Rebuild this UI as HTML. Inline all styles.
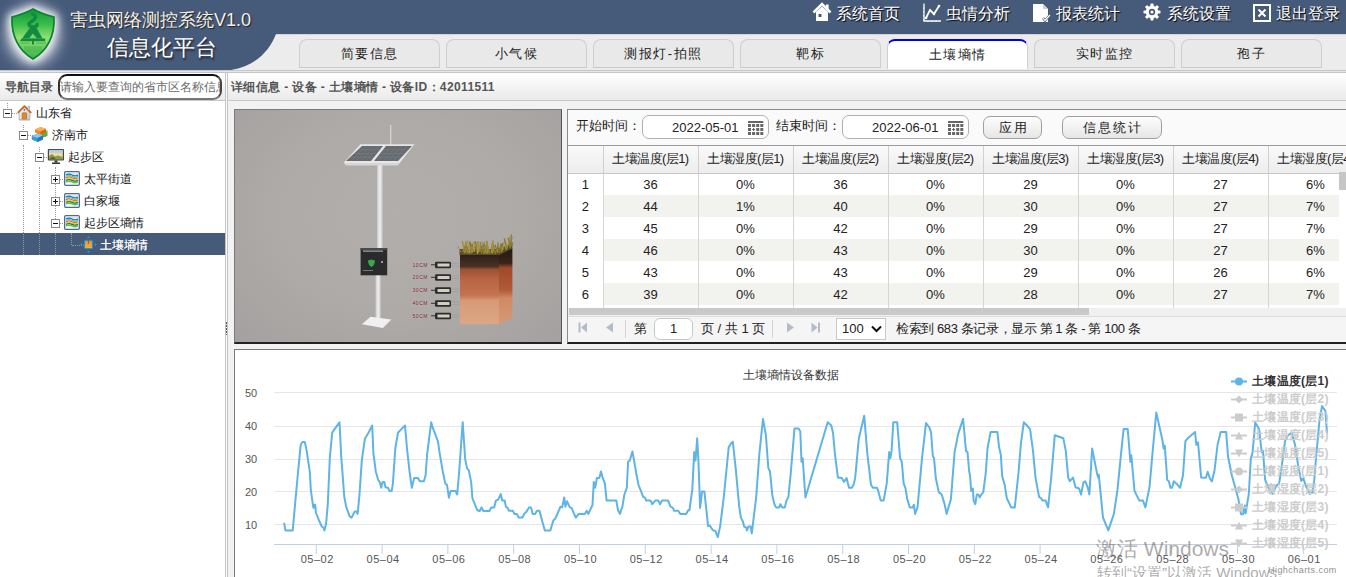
<!DOCTYPE html>
<html><head><meta charset="utf-8">
<style>
*{margin:0;padding:0;box-sizing:border-box}
html,body{width:1346px;height:577px;overflow:hidden;background:#fff;font-family:"Liberation Sans",sans-serif;color:#222}
.a{position:absolute}
.t{white-space:nowrap}
#hdr{left:0;top:0;width:1346px;height:34px;background:#465a7a}
#tabbar{left:0;top:34px;width:1346px;height:37px;background:#ececec;border-top:1px solid #d4d4d4;border-bottom:1px solid #c6c6c6}
#tabline{left:0;top:71px;width:1346px;height:2px;background:#e6e6e6;border-bottom:1px solid #c4c4c4}
.tab{top:39px;width:141px;height:29px;border:1px solid #cfcfcf;border-bottom:1px solid #c8c8c8;border-radius:8px 8px 0 0;background:#e9e9e9;font-size:13px;letter-spacing:1.5px;text-align:center;line-height:28px;color:#222}
.tab.on{background:#fff;border-top:2px solid #0000ee;border-bottom:none;height:30px;line-height:27px}
.nav{top:3px;height:22px;font-size:16px;color:#fff;line-height:22px;text-shadow:1px 1px 1px #000}
#lefthd{left:0;top:73px;width:225px;height:28px;background:linear-gradient(#ffffff,#eaeaea);border-bottom:1px solid #c8c8c8}
#righthd{left:228px;top:73px;width:1118px;height:28px;background:linear-gradient(#ffffff,#eaeaea);border-bottom:1px solid #c8c8c8}
#split{left:225px;top:73px;width:3px;height:504px;background:#fcfcfc;border-left:1px solid #c4c4c4;border-right:1px solid #c4c4c4}
#content{left:228px;top:101px;width:1118px;height:476px;background:#f2f2f2}
.tree{font-size:12px;line-height:22px;height:22px;color:#111}
.tg{width:9px;height:9px;border:1px solid #888;background:#fff}
.tg:before{content:"";position:absolute;left:1px;top:3px;width:5px;height:1px;background:#111}
.tg.p:after{content:"";position:absolute;left:3px;top:1px;width:1px;height:5px;background:#111}
.vd{width:1px;border-left:1px dotted #999}
.hd{height:1px;border-top:1px dotted #999}
#img{left:234px;top:109px;width:328px;height:235px;background:radial-gradient(ellipse at 50% 45%,#b2aeac 0%,#adaaa8 55%,#a4a09f 100%);border:1px solid #7a7a7a;border-bottom:2px solid #222;border-right:1px solid #555}
#data{left:567px;top:109px;width:790px;height:235px;background:#fff;border:1px solid #8a8a8a;border-bottom:2px solid #222}
#tool{left:568px;top:110px;width:778px;height:36px;background:#fafafa;border-bottom:1px solid #9a9a9a}
.lbl{font-size:13px;color:#222;line-height:16px}
.inp{height:24px;border:1px solid #b0b0b0;border-radius:7px;background:#fff;font-size:13px;line-height:21px;color:#222}
.btn{height:23px;border:1px solid #a0a0a0;border-radius:7px;background:linear-gradient(#fdfdfd,#e6e6e6);font-size:13px;line-height:21px;text-align:center;letter-spacing:2px;padding-left:2px;color:#222}
table{border-collapse:collapse;table-layout:fixed}
#tbl{left:568px;top:146px;}
#tbl th{height:27px;letter-spacing:-0.6px;font-weight:normal;font-size:13px;background:linear-gradient(#fafafa,#ececec);border-right:1px solid #d0d0d0;border-bottom:1px solid #c8c8c8;color:#222;white-space:nowrap;overflow:hidden;padding:0}
#tbl td{height:22px;font-size:13px;text-align:center;border-right:1px solid #d6d6d6;color:#222;padding:0;white-space:nowrap}
#tbl tr.e td{background:#f2f2ee}
#tbl td.n{background:#fff !important}
#pager{left:568px;top:316px;width:778px;height:26px;background:#f5f5f5;border-top:1px solid #dcdcdc}
#chart{left:234px;top:349px;width:1112px;height:228px;background:#fff;border-left:1px solid #777;border-top:1px solid #777}
.yl{font-size:11px;color:#555;line-height:12px}
.xl{font-size:11px;color:#555;line-height:12px;letter-spacing:0.5px}
.lg{font-size:12px;font-weight:bold;color:#ccc;line-height:14px;letter-spacing:0.25px}
</style></head><body>
<!-- header -->
<div id="hdr" class="a"></div>
<div id="tabbar" class="a"></div>
<div id="tabline" class="a"></div>
<svg class="a" style="left:0;top:0" width="300" height="72">
  <defs>
    <filter id="blur" x="-50%" y="-50%" width="200%" height="200%"><feGaussianBlur stdDeviation="4"/></filter><filter id="blur2" x="-50%" y="-50%" width="200%" height="200%"><feGaussianBlur stdDeviation="7"/></filter>
    <linearGradient id="shg" x1="0" y1="0" x2="0" y2="1"><stop offset="0" stop-color="#12963a"/><stop offset="0.3" stop-color="#38bc48"/><stop offset="0.58" stop-color="#92e272"/><stop offset="0.8" stop-color="#64ca5a"/><stop offset="1" stop-color="#3aae4c"/></linearGradient>
  </defs>
  <path d="M0,0 L300,0 L300,34 L276,34 C270,50 256,66 231,70 L0,70 Z" fill="#465a7a"/>
  <ellipse cx="33" cy="35" rx="27" ry="30" fill="#fff" opacity="0.6" filter="url(#blur2)"/>
  <path d="M33,6 C40,11 48,13 57,14 C58,36 50,54 33,63 C16,54 8,36 9,14 C18,13 26,11 33,6 Z" fill="#fff" opacity="1" filter="url(#blur)"/>
  <path d="M33,9 C40,13 47,15 54,17 C55,36 47,51 33,59 C19,51 11,36 12,17 C19,15 26,13 33,9 Z" fill="url(#shg)" stroke="#0a8232" stroke-width="1.7"/>
  <g fill="none" stroke="#128a40" stroke-linecap="round">
    <path d="M32.5,14 C37,15.5 36,19 31.5,21.5 C27.5,23.5 28.5,26.5 33,26.8 C36,27 37.5,25.5 37,24.5" stroke-width="3.4"/>
  </g>
  <path d="M30.5,27 L35.5,26 L42.5,38.6 L22,38.6 Z" fill="#128a40"/>
  <path d="M32.8,33.5 L29,38.6 L37,38.6 Z" fill="#7ad464"/>
  <path d="M21.5,38.4 L45.2,38.4 L45.2,41.2 L20,41.2 Z" fill="#128a40"/>
  <rect x="32" y="41" width="2" height="3.5" fill="#128a40"/>
  <g fill="#2a9a48" opacity="0.6"><rect x="20" y="42.5" width="10" height="1"/><rect x="36" y="42.5" width="10" height="1"/><rect x="24" y="46" width="18" height="6" opacity="0.4"/></g>
</svg>
<div class="a t" style="left:70px;top:9px;font-size:18px;line-height:22px;color:#f4f0e6;text-shadow:1px 1px 1px #222">害虫网络测控系统V1.0</div>
<div class="a t" style="left:107px;top:35px;font-size:22px;line-height:26px;color:#fff;text-shadow:1px 2px 2px #222">信息化平台</div>

<!-- nav -->
<svg class="a" style="left:812px;top:2px" width="20" height="20" viewBox="0 0 20 20">
  <path d="M1.5,10.5 L10,2 L18.5,10.5" stroke="#fff" stroke-width="2.6" fill="none" stroke-linejoin="miter"/>
  <rect x="14" y="2.5" width="2.6" height="5" fill="#fff"/>
  <path d="M4,10 L10,4.5 L16,10 L16,19 L4,19 Z" fill="#fff"/>
  <rect x="6.5" y="12" width="3" height="3" fill="#465a7a"/>
</svg>
<div class="a t nav" style="left:836px">系统首页</div>
<svg class="a" style="left:922px;top:2px" width="20" height="20" viewBox="0 0 20 20">
  <path d="M2,1.5 L2,19 L19,19" stroke="#fff" stroke-width="1.3" fill="none"/>
  <path d="M2,18 L1,18 M2,14 L1,14 M2,10 L1,10 M2,6 L1,6 M6,19 L6,20 M10,19 L10,20 M14,19 L14,20" stroke="#fff" stroke-width="1"/>
  <path d="M4,16 L8,8 L12,12 L17,4" stroke="#fff" stroke-width="1.8" fill="none"/>
  <circle cx="4" cy="16" r="1.3" fill="#fff"/><circle cx="12" cy="12" r="1.3" fill="#fff"/><circle cx="17" cy="4" r="1.3" fill="#fff"/>
</svg>
<div class="a t nav" style="left:946px">虫情分析</div>
<svg class="a" style="left:1032px;top:3px" width="20" height="20" viewBox="0 0 20 20">
  <path d="M1,1 L11,1 L16,6 L16,19 L1,19 Z" fill="#fff"/>
  <path d="M11,1 L11,6 L16,6" fill="#ccd" />
  <path d="M11,15 L13,17.5 L18,12" stroke="#465a7a" stroke-width="2.5" fill="none"/>
  <path d="M11,15 L13,17.5 L18,12" stroke="#fff" stroke-width="1.2" fill="none"/>
</svg>
<div class="a t nav" style="left:1056px">报表统计</div>
<svg class="a" style="left:1143px;top:3px" width="18" height="18" viewBox="0 0 18 18">
  <g fill="#fff">
   <circle cx="9" cy="9" r="6.2"/>
   <rect x="7.4" y="0.5" width="3.2" height="17" rx="0.8"/>
   <rect x="7.4" y="0.5" width="3.2" height="17" rx="0.8" transform="rotate(45 9 9)"/>
   <rect x="7.4" y="0.5" width="3.2" height="17" rx="0.8" transform="rotate(90 9 9)"/>
   <rect x="7.4" y="0.5" width="3.2" height="17" rx="0.8" transform="rotate(135 9 9)"/>
  </g>
  <circle cx="9" cy="9" r="3.2" fill="#465a7a"/>
  <circle cx="9" cy="9" r="1.6" fill="#fff"/>
</svg>
<div class="a t nav" style="left:1167px">系统设置</div>
<svg class="a" style="left:1253px;top:4px" width="18" height="18" viewBox="0 0 18 18">
  <rect x="1" y="1" width="16" height="16" fill="none" stroke="#fff" stroke-width="2"/>
  <path d="M5.5,5.5 L12.5,12.5 M12.5,5.5 L5.5,12.5" stroke="#fff" stroke-width="2"/>
</svg>
<div class="a t nav" style="left:1276px">退出登录</div>

<!-- tabs -->
<div class="a t tab" style="left:299px">简要信息</div>
<div class="a t tab" style="left:446px">小气候</div>
<div class="a t tab" style="left:593px">测报灯-拍照</div>
<div class="a t tab" style="left:740px">靶标</div>
<div class="a t tab on" style="left:887px">土壤墒情</div>
<div class="a t tab" style="left:1034px">实时监控</div>
<div class="a t tab" style="left:1181px">孢子</div>

<!-- left panel -->
<div id="lefthd" class="a"></div>
<div class="a t" style="left:5px;top:79px;font-size:12px;font-weight:bold;color:#555;line-height:16px">导航目录</div>
<div class="a" style="left:58px;top:74px;width:164px;height:26px;border:2px solid #222;border-color:#111 #444 #777 #333;border-radius:9px;background:#fff;overflow:hidden">
  <div class="a t" style="left:0px;top:3px;font-size:12px;color:#6c6c6c;line-height:16px">请输入要查询的省市区名称信息</div>
</div>
<div id="split" class="a"></div>
<div class="a" style="left:226px;top:322px;width:1px;height:13px;background:repeating-linear-gradient(#555 0 1.5px,transparent 1.5px 3px)"></div>
<div id="righthd" class="a"></div>
<div class="a t" style="left:231px;top:79px;font-size:12px;font-weight:bold;color:#555;line-height:16px;letter-spacing:0.37px">详细信息 - 设备 - 土壤墒情 - 设备ID：42011511</div>
<div id="content" class="a"></div>

<!-- tree -->
<div class="a" style="left:0;top:233px;width:225px;height:22px;background:#465a7a"></div>
<div class="a vd" style="left:7px;top:103px;height:5px"></div>
<div class="a hd" style="left:12px;top:113px;width:5px"></div>
<div class="a tg" style="left:3px;top:109px"></div>
<div class="a vd" style="left:23px;top:125px;height:5px"></div>
<div class="a hd" style="left:28px;top:135px;width:5px"></div>
<div class="a tg" style="left:19px;top:131px"></div>
<div class="a vd" style="left:23px;top:145px;height:110px"></div>
<div class="a vd" style="left:39px;top:147px;height:5px"></div>
<div class="a hd" style="left:44px;top:157px;width:5px"></div>
<div class="a tg" style="left:35px;top:153px"></div>
<div class="a vd" style="left:39px;top:167px;height:88px"></div>
<div class="a vd" style="left:55px;top:167px;height:60px"></div>
<div class="a hd" style="left:60px;top:179px;width:5px"></div>
<div class="a tg p" style="left:51px;top:175px"></div>
<div class="a hd" style="left:60px;top:201px;width:5px"></div>
<div class="a tg p" style="left:51px;top:197px"></div>
<div class="a hd" style="left:60px;top:223px;width:5px"></div>
<div class="a tg" style="left:51px;top:219px"></div>
<div class="a vd" style="left:55px;top:233px;height:22px"></div>
<div class="a vd" style="left:71px;top:233px;height:12px"></div>
<div class="a hd" style="left:72px;top:245px;width:12px"></div>

<!-- tree icons -->
<svg class="a" style="left:17px;top:105px" width="15" height="16" viewBox="0 0 15 16">
  <defs><linearGradient id="wall" x1="0" y1="0" x2="1" y2="1"><stop offset="0" stop-color="#fafafa"/><stop offset="1" stop-color="#c8c8c8"/></linearGradient></defs>
  <path d="M2,7 L7.5,2 L13,7 L13,14.5 L2,14.5 Z" fill="url(#wall)" stroke="#a0a0a0" stroke-width="0.6"/>
  <path d="M0.8,7.8 L7.5,1.2 L14.2,7.8" stroke="#c8641a" stroke-width="1.8" fill="none" stroke-linejoin="round"/>
  <rect x="11" y="1" width="1.8" height="4" fill="#d8d8d8" stroke="#999" stroke-width="0.4"/>
  <rect x="5.2" y="7.8" width="4.4" height="6.5" rx="0.8" fill="#e08a20" stroke="#b06010" stroke-width="0.6"/>
  <circle cx="7.4" cy="4.8" r="0.9" fill="#2a70c8"/>
  <rect x="2" y="14.5" width="11" height="1" fill="#b0b0b0"/>
</svg>
<div class="a t tree" style="left:36px;top:102px">山东省</div>
<svg class="a" style="left:31px;top:126px" width="18" height="17" viewBox="0 0 18 17">
  <path d="M11,6 L16.5,4.5 L16.5,10 L11,12 Z" fill="#58b040"/><path d="M11,6 L13,5.3 L16.5,4.5 L16.5,5.5 Z" fill="#90d870"/>
  <path d="M4,3.5 L9.5,1 L15,3 L15,6.5 L9.5,9 L4,6.5 Z" fill="#f08820"/>
  <path d="M4,3.5 L9.5,1 L15,3 L9.5,5.5 Z" fill="#ffb050"/>
  <path d="M9.5,5.5 L15,3 L15,6.5 L9.5,9 Z" fill="#d86810"/>
  <path d="M0.8,10 L6.5,7.5 L12,9.5 L12,13.5 L6.5,16 L0.8,13.5 Z" fill="#3a98d8"/>
  <path d="M0.8,10 L6.5,7.5 L12,9.5 L6.5,12 Z" fill="#8ac8f0"/>
  <path d="M6.5,12 L12,9.5 L12,13.5 L6.5,16 Z" fill="#2a78b8"/>
</svg>
<div class="a t tree" style="left:52px;top:124px">济南市</div>
<svg class="a" style="left:47px;top:148px" width="18" height="17" viewBox="0 0 18 17">
  <rect x="0.8" y="1" width="16.2" height="11.5" rx="0.8" fill="#4a4a4a"/>
  <rect x="2" y="2.2" width="13.8" height="9" fill="#f0d8a0"/>
  <rect x="2" y="2.2" width="13.8" height="2.5" fill="#a8d0e8"/>
  <path d="M2,11.2 L2,8 L5,6 L8,8.5 L11,7.5 L15.8,9 L15.8,11.2 Z" fill="#8a9a48"/>
  <path d="M2,11.2 L6,8.5 L9,11.2 Z" fill="#6a5a30"/>
  <rect x="7.5" y="12.5" width="3" height="2" fill="#333"/><rect x="5" y="14.5" width="8" height="1.5" fill="#333"/>
</svg>
<div class="a t tree" style="left:68px;top:146px">起步区</div>
<svg class="a" style="left:64px;top:171px" width="16" height="15" viewBox="0 0 16 15">
  <rect x="0.65" y="0.65" width="14.7" height="13.7" rx="1" fill="#fdfdf8" stroke="#4c6c92" stroke-width="1.3"/>
  <rect x="2" y="2" width="12" height="1.6" fill="#e4e0e0"/>
  <path d="M2,4 Q5,2.4 8,4 T14,4" stroke="#1878b8" stroke-width="1.3" fill="none"/>
  <path d="M2,5.3 Q5,3.7 8,5.3 T14,5.3" stroke="#40c0f0" stroke-width="1.1" fill="none"/>
  <path d="M2,6.7 Q5,5.1 8,6.7 T14,6.7" stroke="#e87010" stroke-width="1.3" fill="none"/>
  <path d="M2,8 Q5,6.4 8,8 T14,8" stroke="#f8c030" stroke-width="1.1" fill="none"/>
  <path d="M2,9.4 Q5,7.8 8,9.4 T14,9.4" stroke="#108040" stroke-width="1.3" fill="none"/>
  <path d="M2,11 Q5,9.4 8,11 T14,11" stroke="#60c050" stroke-width="1.4" fill="none"/>
</svg>
<div class="a t tree" style="left:84px;top:168px">太平街道</div>
<svg class="a" style="left:64px;top:193px" width="16" height="15" viewBox="0 0 16 15">
  <rect x="0.65" y="0.65" width="14.7" height="13.7" rx="1" fill="#fdfdf8" stroke="#4c6c92" stroke-width="1.3"/>
  <rect x="2" y="2" width="12" height="1.6" fill="#e4e0e0"/>
  <path d="M2,4 Q5,2.4 8,4 T14,4" stroke="#1878b8" stroke-width="1.3" fill="none"/>
  <path d="M2,5.3 Q5,3.7 8,5.3 T14,5.3" stroke="#40c0f0" stroke-width="1.1" fill="none"/>
  <path d="M2,6.7 Q5,5.1 8,6.7 T14,6.7" stroke="#e87010" stroke-width="1.3" fill="none"/>
  <path d="M2,8 Q5,6.4 8,8 T14,8" stroke="#f8c030" stroke-width="1.1" fill="none"/>
  <path d="M2,9.4 Q5,7.8 8,9.4 T14,9.4" stroke="#108040" stroke-width="1.3" fill="none"/>
  <path d="M2,11 Q5,9.4 8,11 T14,11" stroke="#60c050" stroke-width="1.4" fill="none"/>
</svg>
<div class="a t tree" style="left:84px;top:190px">白家堰</div>
<svg class="a" style="left:64px;top:215px" width="16" height="15" viewBox="0 0 16 15">
  <rect x="0.65" y="0.65" width="14.7" height="13.7" rx="1" fill="#fdfdf8" stroke="#4c6c92" stroke-width="1.3"/>
  <rect x="2" y="2" width="12" height="1.6" fill="#e4e0e0"/>
  <path d="M2,4 Q5,2.4 8,4 T14,4" stroke="#1878b8" stroke-width="1.3" fill="none"/>
  <path d="M2,5.3 Q5,3.7 8,5.3 T14,5.3" stroke="#40c0f0" stroke-width="1.1" fill="none"/>
  <path d="M2,6.7 Q5,5.1 8,6.7 T14,6.7" stroke="#e87010" stroke-width="1.3" fill="none"/>
  <path d="M2,8 Q5,6.4 8,8 T14,8" stroke="#f8c030" stroke-width="1.1" fill="none"/>
  <path d="M2,9.4 Q5,7.8 8,9.4 T14,9.4" stroke="#108040" stroke-width="1.3" fill="none"/>
  <path d="M2,11 Q5,9.4 8,11 T14,11" stroke="#60c050" stroke-width="1.4" fill="none"/>
</svg>
<div class="a t tree" style="left:84px;top:212px">起步区墒情</div>
<svg class="a" style="left:80px;top:236px" width="17" height="17" viewBox="0 0 17 17">
  <defs><linearGradient id="og" x1="0" y1="0" x2="0" y2="1"><stop offset="0" stop-color="#d89040"/><stop offset="1" stop-color="#f8b040"/></linearGradient></defs>
  <path d="M8.5,0.3 L6.8,2 L10.2,2 Z M8.5,16.7 L6.8,15 L10.2,15 Z M0.3,8.5 L2,6.8 L2,10.2 Z M16.7,8.5 L15,6.8 L15,10.2 Z" fill="#2a98d8"/>
  <rect x="4.3" y="4.3" width="8.4" height="8.4" rx="0.8" fill="url(#og)" stroke="#1a88c8" stroke-width="1.1"/>
  <rect x="8" y="4.5" width="1" height="3" fill="#b05020"/>
</svg>
<div class="a t tree" style="left:100px;top:234px;color:#fff;text-shadow:0 0 0.4px #fff">土壤墒情</div>

<!-- image -->
<div id="img" class="a"></div>
<svg class="a" style="left:235px;top:110px" width="326" height="233" viewBox="235 110 326 233">
  <defs>
    <linearGradient id="pole" x1="0" x2="1">
      <stop offset="0" stop-color="#c8c8c8"/><stop offset="0.5" stop-color="#f2f2f2"/><stop offset="1" stop-color="#b8b8b8"/>
    </linearGradient>
    <linearGradient id="soil" x1="0" y1="0" x2="0" y2="1"><stop offset="0" stop-color="#2c201a"/><stop offset="0.17" stop-color="#4a3224"/><stop offset="0.21" stop-color="#9a5234"/><stop offset="0.35" stop-color="#b86444"/><stop offset="0.58" stop-color="#c27450"/><stop offset="0.66" stop-color="#d89a78"/><stop offset="1" stop-color="#dca684"/></linearGradient>
    <linearGradient id="soil2" x1="0" y1="0" x2="0" y2="1"><stop offset="0" stop-color="#241a16"/><stop offset="0.2" stop-color="#3a2418"/><stop offset="0.26" stop-color="#a04a2c"/><stop offset="0.55" stop-color="#b05a38"/><stop offset="0.66" stop-color="#d08a64"/><stop offset="1" stop-color="#d49a78"/></linearGradient>
  </defs>
  <line x1="390.8" y1="125" x2="390.8" y2="145" stroke="#e0e0e0" stroke-width="1"/>
  <rect x="377" y="163" width="6" height="86" fill="url(#pole)"/>
  <rect x="375.5" y="275" width="5.5" height="44" fill="url(#pole)"/>
  <path d="M360.4,144.2 L414.5,144.2 L399.8,162.9 L343.5,162.9 Z" fill="#e6e6e6"/>
  <path d="M362,146 L383,146 L371,161 L346,161 Z" fill="#666b70"/>
  <path d="M386,146 L412,146 L398,161 L374,161 Z" fill="#666b70"/><path d="M343.5,162.9 L399.8,162.9 L398,165.5 L346,165.5 Z" fill="#d6d6d6"/><g stroke="#80868c" stroke-width="0.5" opacity="0.8"><line x1="358.0" y1="149.8" x2="380.0" y2="149.8"/><line x1="383.0" y1="149.8" x2="408.5" y2="149.8"/><line x1="354.0" y1="153.5" x2="377.0" y2="153.5"/><line x1="380.0" y1="153.5" x2="405.0" y2="153.5"/><line x1="350.0" y1="157.2" x2="374.0" y2="157.2"/><line x1="377.0" y1="157.2" x2="401.5" y2="157.2"/><line x1="366.2" y1="146" x2="351.0" y2="161"/><line x1="391.2" y1="146" x2="378.8" y2="161"/><line x1="370.4" y1="146" x2="356.0" y2="161"/><line x1="396.4" y1="146" x2="383.6" y2="161"/><line x1="374.6" y1="146" x2="361.0" y2="161"/><line x1="401.6" y1="146" x2="388.4" y2="161"/><line x1="378.8" y1="146" x2="366.0" y2="161"/><line x1="406.8" y1="146" x2="393.2" y2="161"/></g>
  <path d="M361.9,324.3 L370.5,316.7 L391.4,319.5 L382.9,328.1 Z" fill="#f0f0f0"/>
  <rect x="360.6" y="248" width="26.6" height="27.3" fill="#2a2b2c"/>
  <rect x="360.6" y="248" width="26.6" height="2" fill="#4a4a4a"/><rect x="363" y="250.5" width="20" height="1.2" fill="#aaa"/>
  <path d="M368,260.5 L371.5,259.5 L375,260.5 C375,264 373.5,266 371.5,267 C369.5,266 368,264 368,260.5 Z" fill="#3aa848"/><circle cx="382" cy="262" r="0.9" fill="#ccc"/><rect x="363" y="270" width="10" height="1" fill="#777"/>
  <g fill="#c8b0b0" opacity="0.7">
    <rect x="412" y="262.5" width="16" height="4.5"/><rect x="412" y="275" width="16" height="4.5"/><rect x="412" y="288" width="16" height="4.5"/><rect x="412" y="301" width="16" height="4.5"/><rect x="412" y="313.5" width="16" height="4.5"/>
  </g>
  <g font-size="5" fill="#6a2a38" font-family="Liberation Sans" textLength="15">
    <text x="412.5" y="266.8" textLength="15">10CM</text><text x="412.5" y="279.3" textLength="15">20CM</text><text x="412.5" y="292.3" textLength="15">30CM</text><text x="412.5" y="305.3" textLength="15">40CM</text><text x="412.5" y="317.8" textLength="15">50CM</text>
  </g>
  <g>
    <g stroke="#333" stroke-width="1"><line x1="431" y1="264.8" x2="436" y2="264.8"/><line x1="431" y1="277.3" x2="436" y2="277.3"/><line x1="431" y1="290.3" x2="436" y2="290.3"/><line x1="431" y1="303.3" x2="436" y2="303.3"/><line x1="431" y1="315.8" x2="436" y2="315.8"/></g>
    <g stroke="#9a9a9a" stroke-width="0.6"><path d="M451,263.5 H459 M451,266 H459 M451,276 H459 M451,278.5 H459 M451,289 H459 M451,291.5 H459 M451,302 H459 M451,304.5 H459 M451,314.5 H459 M451,317 H459"/></g>
    <rect x="435" y="261.8" width="16" height="6.5" rx="1.3" fill="#2c2c2c"/>
    <rect x="435" y="274.3" width="16" height="6.5" rx="1.3" fill="#2c2c2c"/>
    <rect x="435" y="287.3" width="16" height="6.5" rx="1.3" fill="#2c2c2c"/>
    <rect x="435" y="300.3" width="16" height="6.5" rx="1.3" fill="#2c2c2c"/>
    <rect x="435" y="312.8" width="16" height="6.5" rx="1.3" fill="#2c2c2c"/>
    <g fill="#d0d0c0">
    <rect x="437.5" y="263.5" width="12" height="3"/><rect x="437.5" y="276" width="12" height="3"/><rect x="437.5" y="289" width="12" height="3"/><rect x="437.5" y="302" width="12" height="3"/><rect x="437.5" y="314.5" width="12" height="3"/>
    </g>
  </g>
  <path d="M460,254.8 L499,254.8 L499,324.3 L460,324.3 Z" fill="url(#soil)"/>
  <path d="M499,254.8 L512.4,248 L512.4,318 L499,324.3 Z" fill="url(#soil2)"/>
  <path d="M459.5,255 L459.5,249 L499,249 L512.4,243 L512.4,248.2 L499,255 Z" fill="#5a4a28"/><g stroke-linecap="round"><path d="M476.5,251.4 L474.0,242.2" stroke="#7a6a2a" stroke-width="0.9"/><path d="M489.7,253.3 L487.2,247.6" stroke="#a89848" stroke-width="0.9"/><path d="M464.6,252.1 L462.4,241.4" stroke="#9a8a3c" stroke-width="1.3"/><path d="M489.7,251.2 L487.0,242.5" stroke="#9a8a3c" stroke-width="0.8"/><path d="M503.8,249.3 L501.5,244.2" stroke="#8a7830" stroke-width="1.2"/><path d="M494.8,251.3 L492.9,242.7" stroke="#8c7c34" stroke-width="1.2"/><path d="M463.2,251.1 L464.3,245.5" stroke="#a89848" stroke-width="1.4"/><path d="M483.7,253.3 L482.2,246.4" stroke="#9a8a3c" stroke-width="1.4"/><path d="M472.4,252.4 L474.7,244.2" stroke="#a89848" stroke-width="1.0"/><path d="M510.0,245.8 L511.5,238.5" stroke="#9a8a3c" stroke-width="1.5"/><path d="M481.5,253.4 L481.9,248.8" stroke="#8a7830" stroke-width="1.1"/><path d="M477.9,252.2 L475.3,241.9" stroke="#8c7c34" stroke-width="1.6"/><path d="M484.2,252.7 L485.4,248.2" stroke="#7a6a2a" stroke-width="1.6"/><path d="M501.9,250.3 L502.9,243.2" stroke="#8c7c34" stroke-width="1.6"/><path d="M478.1,252.5 L476.4,244.6" stroke="#8a7830" stroke-width="0.9"/><path d="M472.6,252.0 L470.1,241.0" stroke="#a89848" stroke-width="1.1"/><path d="M474.2,251.3 L474.5,243.9" stroke="#a89848" stroke-width="1.6"/><path d="M494.8,252.0 L492.3,246.1" stroke="#9a8a3c" stroke-width="1.0"/><path d="M471.9,252.2 L470.5,243.5" stroke="#8c7c34" stroke-width="0.9"/><path d="M487.3,252.5 L485.0,246.0" stroke="#7a6a2a" stroke-width="1.6"/><path d="M493.4,252.8 L495.6,245.2" stroke="#7a6a2a" stroke-width="1.1"/><path d="M480.3,251.3 L477.7,242.2" stroke="#8c7c34" stroke-width="1.6"/><path d="M482.5,251.3 L480.1,242.5" stroke="#7a6a2a" stroke-width="0.9"/><path d="M465.2,251.9 L467.4,247.7" stroke="#7a6a2a" stroke-width="1.1"/><path d="M492.4,253.4 L492.2,244.6" stroke="#8c7c34" stroke-width="1.5"/><path d="M510.6,246.3 L508.2,238.5" stroke="#8c7c34" stroke-width="1.4"/><path d="M497.8,252.2 L497.9,242.7" stroke="#9a8a3c" stroke-width="1.6"/><path d="M486.9,251.4 L484.1,243.0" stroke="#7a6a2a" stroke-width="1.0"/><path d="M492.8,251.2 L492.9,240.5" stroke="#9a8a3c" stroke-width="1.1"/><path d="M471.4,252.4 L472.2,244.3" stroke="#7a6a2a" stroke-width="1.4"/><path d="M510.2,247.5 L512.1,237.1" stroke="#9a8a3c" stroke-width="1.0"/><path d="M485.1,252.8 L486.9,240.9" stroke="#a89848" stroke-width="1.0"/><path d="M495.3,253.4 L497.9,245.8" stroke="#8a7830" stroke-width="1.6"/><path d="M478.6,251.6 L476.8,245.7" stroke="#9a8a3c" stroke-width="1.2"/><path d="M510.2,246.9 L512.7,242.9" stroke="#8a7830" stroke-width="1.4"/><path d="M464.3,252.7 L466.0,241.4" stroke="#9a8a3c" stroke-width="1.2"/><path d="M469.1,253.0 L470.9,246.3" stroke="#a89848" stroke-width="1.2"/><path d="M497.9,251.2 L500.9,245.9" stroke="#8c7c34" stroke-width="0.9"/><path d="M506.1,249.4 L508.1,244.3" stroke="#a89848" stroke-width="1.3"/><path d="M477.9,252.4 L475.0,247.3" stroke="#8c7c34" stroke-width="1.2"/><path d="M507.6,247.8 L509.6,236.8" stroke="#9a8a3c" stroke-width="0.8"/><path d="M470.9,252.3 L469.8,242.1" stroke="#7a6a2a" stroke-width="1.1"/><path d="M466.7,253.3 L466.4,246.4" stroke="#7a6a2a" stroke-width="1.5"/><path d="M486.4,253.1 L484.1,242.0" stroke="#9a8a3c" stroke-width="1.2"/><path d="M461.0,252.1 L458.0,246.6" stroke="#9a8a3c" stroke-width="0.9"/><path d="M484.1,252.8 L483.1,244.4" stroke="#7a6a2a" stroke-width="1.2"/><path d="M484.6,252.9 L481.9,241.9" stroke="#9a8a3c" stroke-width="1.0"/><path d="M499.4,252.1 L500.9,243.6" stroke="#8c7c34" stroke-width="1.2"/><path d="M491.2,252.3 L492.4,244.2" stroke="#a89848" stroke-width="1.2"/><path d="M501.2,251.2 L501.3,245.2" stroke="#8a7830" stroke-width="1.5"/><path d="M505.5,248.2 L505.0,240.7" stroke="#a89848" stroke-width="1.2"/><path d="M463.7,251.6 L464.7,247.0" stroke="#8c7c34" stroke-width="1.5"/><path d="M467.9,252.8 L465.7,243.5" stroke="#9a8a3c" stroke-width="1.6"/><path d="M471.2,253.4 L471.1,246.2" stroke="#9a8a3c" stroke-width="0.9"/><path d="M482.0,252.3 L480.2,245.6" stroke="#8a7830" stroke-width="0.9"/><path d="M478.7,251.8 L479.9,244.2" stroke="#a89848" stroke-width="1.1"/><path d="M491.8,252.3 L494.7,247.8" stroke="#9a8a3c" stroke-width="1.6"/><path d="M465.3,251.7 L467.0,247.3" stroke="#8a7830" stroke-width="1.4"/><path d="M501.8,251.7 L504.5,242.3" stroke="#a89848" stroke-width="0.9"/><path d="M506.9,248.5 L504.4,238.9" stroke="#8c7c34" stroke-width="1.4"/><path d="M469.4,253.2 L466.5,247.1" stroke="#8c7c34" stroke-width="1.4"/><path d="M464.3,253.1 L466.4,248.6" stroke="#a89848" stroke-width="0.8"/><path d="M510.7,246.2 L511.4,234.9" stroke="#8c7c34" stroke-width="1.2"/><path d="M472.2,251.3 L469.5,246.0" stroke="#9a8a3c" stroke-width="1.5"/><path d="M492.1,252.3 L491.7,246.7" stroke="#9a8a3c" stroke-width="1.0"/><path d="M501.0,252.5 L498.1,248.2" stroke="#7a6a2a" stroke-width="1.2"/><path d="M469.7,252.2 L467.3,240.7" stroke="#a89848" stroke-width="1.3"/><path d="M487.8,253.2 L486.7,241.5" stroke="#9a8a3c" stroke-width="1.6"/><path d="M477.5,253.1 L478.3,243.4" stroke="#a89848" stroke-width="1.6"/><path d="M510.1,247.6 L510.8,243.4" stroke="#8a7830" stroke-width="1.1"/></g>
</svg>

<!-- data panel -->
<div id="data" class="a"></div>
<div id="tool" class="a"></div>
<div class="a t lbl" style="left:576px;top:118px">开始时间：</div>
<div class="a inp" style="left:642px;top:115px;width:127px"><span class="a t" style="left:29px;top:1px">2022-05-01</span></div>
<div class="a t lbl" style="left:776px;top:118px">结束时间：</div>
<div class="a inp" style="left:842px;top:115px;width:127px"><span class="a t" style="left:29px;top:1px">2022-06-01</span></div>
<svg class="a" style="left:748px;top:121px" width="16" height="15" viewBox="0 0 16 15"><g fill="#666"><rect x="0" y="0" width="15.3" height="2"/><rect x="0" y="3" width="3" height="3"/><rect x="4.1" y="3" width="3" height="3"/><rect x="8.2" y="3" width="3" height="3"/><rect x="12.3" y="3" width="3" height="3"/><rect x="0" y="7" width="3" height="3"/><path d="M5.6,7 V10 M4.1,8.5 H7.1" stroke="#666" stroke-width="1.2"/><rect x="8.2" y="7" width="3" height="3"/><rect x="12.3" y="7" width="3" height="3"/><rect x="0" y="11" width="3" height="3"/><rect x="4.1" y="11" width="3" height="3"/><rect x="8.2" y="11" width="3" height="3"/><rect x="12.3" y="11" width="3" height="3"/></g></svg>
<svg class="a" style="left:948px;top:121px" width="16" height="15" viewBox="0 0 16 15"><g fill="#666"><rect x="0" y="0" width="15.3" height="2"/><rect x="0" y="3" width="3" height="3"/><rect x="4.1" y="3" width="3" height="3"/><rect x="8.2" y="3" width="3" height="3"/><rect x="12.3" y="3" width="3" height="3"/><rect x="0" y="7" width="3" height="3"/><path d="M5.6,7 V10 M4.1,8.5 H7.1" stroke="#666" stroke-width="1.2"/><rect x="8.2" y="7" width="3" height="3"/><rect x="12.3" y="7" width="3" height="3"/><rect x="0" y="11" width="3" height="3"/><rect x="4.1" y="11" width="3" height="3"/><rect x="8.2" y="11" width="3" height="3"/><rect x="12.3" y="11" width="3" height="3"/></g></svg>
<div class="a btn t" style="left:983px;top:116px;width:59px">应用</div>
<div class="a btn t" style="left:1062px;top:116px;width:100px">信息统计</div>

<div class="a" style="left:568px;top:146px;width:778px;height:170px;overflow:hidden">
<table id="tbl" class="a" style="left:0;top:0;width:795px">
<colgroup><col style="width:35px"><col style="width:95px"><col style="width:95px"><col style="width:95px"><col style="width:95px"><col style="width:95px"><col style="width:95px"><col style="width:95px"><col style="width:95px"></colgroup>
<tr><th></th><th>土壤温度(层1)</th><th>土壤湿度(层1)</th><th>土壤温度(层2)</th><th>土壤湿度(层2)</th><th>土壤温度(层3)</th><th>土壤湿度(层3)</th><th>土壤温度(层4)</th><th>土壤湿度(层4)</th></tr>
<tr><td class="n">1</td><td>36</td><td>0%</td><td>36</td><td>0%</td><td>29</td><td>0%</td><td>27</td><td>6%</td></tr>
<tr class="e"><td class="n">2</td><td>44</td><td>1%</td><td>40</td><td>0%</td><td>30</td><td>0%</td><td>27</td><td>7%</td></tr>
<tr><td class="n">3</td><td>45</td><td>0%</td><td>42</td><td>0%</td><td>29</td><td>0%</td><td>27</td><td>7%</td></tr>
<tr class="e"><td class="n">4</td><td>46</td><td>0%</td><td>43</td><td>0%</td><td>30</td><td>0%</td><td>27</td><td>6%</td></tr>
<tr><td class="n">5</td><td>43</td><td>0%</td><td>43</td><td>0%</td><td>29</td><td>0%</td><td>26</td><td>6%</td></tr>
<tr class="e"><td class="n">6</td><td>39</td><td>0%</td><td>42</td><td>0%</td><td>28</td><td>0%</td><td>27</td><td>7%</td></tr>
<tr><td class="n">7</td><td>36</td><td>0%</td><td>40</td><td>0%</td><td>28</td><td>0%</td><td>27</td><td>7%</td></tr>
</table>
</div>
<div class="a" style="left:1339px;top:172px;width:7px;height:136px;background:#fff"></div>
<div class="a" style="left:1339px;top:172px;width:7px;height:18px;background:#c6c6c6"></div>
<div class="a" style="left:568px;top:308px;width:778px;height:8px;background:#f0f0f0"></div>
<div class="a" style="left:569px;top:308px;width:520px;height:7px;background:#c8c9c8"></div>
<div id="pager" class="a"></div>
<svg class="a" style="left:568px;top:316px" width="778" height="26">
  <g fill="#b4bcc8">
   <rect x="10.5" y="6.5" width="2" height="10"/><path d="M19,6.5 L13,11.5 L19,16.5 Z"/>
   <path d="M45,6.5 L38,11.5 L45,16.5 Z"/>
   <path d="M219,6.5 L226,11.5 L219,16.5 Z"/>
   <path d="M243.5,6.5 L249.5,11.5 L243.5,16.5 Z"/><rect x="250" y="6.5" width="2" height="10"/>
  </g>
  <rect x="57" y="4" width="1" height="18" fill="#d4d4d4"/>
  <rect x="204" y="4" width="1" height="18" fill="#d4d4d4"/>
</svg>
<div class="a t lbl" style="left:634px;top:321px">第</div>
<div class="a inp" style="left:654px;top:318px;width:39px;height:22px;border-radius:6px;border-color:#c8c8c8;text-align:center;line-height:20px">1</div>
<div class="a t lbl" style="left:701px;top:321px">页 / 共 1 页</div>
<div class="a" style="left:836px;top:318px;width:50px;height:22px;border:1px solid #c8c8c8;background:#fff;font-size:13px;line-height:20px"><span class="a t" style="left:5px;top:0">100</span>
<svg class="a" style="left:34px;top:6px" width="11" height="8"><path d="M1,1.5 L5.5,6 L10,1.5" stroke="#111" stroke-width="2" fill="none"/></svg></div>
<div class="a t lbl" style="left:896px;top:321px;letter-spacing:-0.4px">检索到 683 条记录，显示 第 1 条 - 第 100 条</div>

<!-- chart -->
<div id="chart" class="a"></div>
<svg class="a" style="left:0;top:0" width="1346" height="577" viewBox="0 0 1346 577">
  <g stroke="#e6e6e6" stroke-width="1">
    <line x1="274" y1="392.5" x2="1337" y2="392.5"/>
    <line x1="274" y1="426.5" x2="1337" y2="426.5"/>
    <line x1="274" y1="459.5" x2="1337" y2="459.5"/>
    <line x1="274" y1="491.5" x2="1337" y2="491.5"/>
    <line x1="274" y1="524.5" x2="1337" y2="524.5"/>
  </g>
  <line x1="274" y1="544.5" x2="1337" y2="544.5" stroke="#c0d0e0" stroke-width="1"/>
  <g stroke="#c0d0e0" stroke-width="1" id="ticks"></g>
  <line x1="316.3" y1="544" x2="316.3" y2="554" stroke="#c0d0e0"/><line x1="382.1" y1="544" x2="382.1" y2="554" stroke="#c0d0e0"/><line x1="447.9" y1="544" x2="447.9" y2="554" stroke="#c0d0e0"/><line x1="513.7" y1="544" x2="513.7" y2="554" stroke="#c0d0e0"/><line x1="579.5" y1="544" x2="579.5" y2="554" stroke="#c0d0e0"/><line x1="645.3" y1="544" x2="645.3" y2="554" stroke="#c0d0e0"/><line x1="711.1" y1="544" x2="711.1" y2="554" stroke="#c0d0e0"/><line x1="776.9" y1="544" x2="776.9" y2="554" stroke="#c0d0e0"/><line x1="842.7" y1="544" x2="842.7" y2="554" stroke="#c0d0e0"/><line x1="908.5" y1="544" x2="908.5" y2="554" stroke="#c0d0e0"/><line x1="974.3" y1="544" x2="974.3" y2="554" stroke="#c0d0e0"/><line x1="1040.1" y1="544" x2="1040.1" y2="554" stroke="#c0d0e0"/><line x1="1105.9" y1="544" x2="1105.9" y2="554" stroke="#c0d0e0"/><line x1="1171.7" y1="544" x2="1171.7" y2="554" stroke="#c0d0e0"/><line x1="1237.5" y1="544" x2="1237.5" y2="554" stroke="#c0d0e0"/><line x1="1303.3" y1="544" x2="1303.3" y2="554" stroke="#c0d0e0"/>
  <path d="M284.2,523.6 L285.4,530.4 L292.7,530.4 L295.1,504.2 L298.2,470.3 L300.7,444.8 L302.4,441.9 L304.8,441.9 L306.7,450.9 L309.9,472.7 L310.8,489.7 L312.8,504.2 L313.5,507.9 L314.0,504.7 L315.2,504.7 L315.9,512.7 L318.8,520.0 L321.8,526.5 L323.7,528.0 L324.4,530.4 L326.1,523.6 L327.8,504.2 L329.8,458.2 L332.2,432.7 L334.6,429.1 L339.5,422.3 L341.2,455.8 L344.3,497.0 L346.2,506.7 L349.6,516.4 L351.6,517.6 L354.7,511.5 L356.4,511.5 L357.6,513.9 L359.3,497.0 L361.8,460.6 L364.9,438.8 L368.5,432.7 L372.2,425.5 L373.4,453.3 L375.8,471.5 L378.2,480.0 L379.9,482.4 L381.2,487.8 L382.6,481.9 L384.3,481.9 L385.5,487.3 L387.9,487.8 L389.6,490.9 L391.7,490.9 L392.9,483.6 L395.3,448.5 L398.0,432.7 L400.9,429.6 L405.0,425.5 L407.0,448.5 L409.4,470.3 L411.8,487.8 L414.2,478.0 L417.9,478.0 L419.8,481.2 L423.9,481.2 L425.6,475.2 L427.1,454.5 L431.2,422.3 L432.4,426.7 L438.0,441.7 L439.7,453.3 L442.8,471.5 L445.3,483.6 L447.0,484.8 L448.9,497.7 L450.6,490.9 L455.5,490.9 L457.2,494.5 L459.1,472.7 L462.7,422.3 L465.2,459.4 L467.1,468.4 L468.8,470.3 L471.2,482.4 L472.4,498.2 L477.3,510.3 L479.7,511.0 L481.6,507.4 L483.3,511.0 L489.4,511.0 L491.3,507.4 L494.2,507.4 L495.9,500.6 L498.4,499.4 L500.8,494.1 L502.2,500.6 L504.7,500.6 L505.9,506.7 L507.6,507.9 L508.9,510.8 L512.8,510.8 L514.5,513.9 L516.9,513.9 L518.6,517.6 L522.5,517.6 L524.2,513.9 L526.6,511.5 L529.0,507.4 L531.0,507.4 L532.7,513.9 L535.1,513.9 L537.0,510.8 L539.5,510.8 L541.9,520.0 L544.8,530.4 L550.4,530.4 L553.3,520.5 L555.2,518.8 L560.5,506.7 L562.2,507.4 L564.2,497.5 L565.4,506.7 L567.1,501.3 L569.8,507.4 L571.5,507.9 L575.8,517.6 L578.7,513.9 L584.8,513.9 L586.7,510.8 L588.4,513.9 L592.5,505.0 L593.8,481.9 L595.2,487.8 L596.9,478.0 L599.3,478.0 L601.0,471.5 L602.5,477.1 L604.9,483.6 L606.6,500.6 L616.3,500.6 L618.0,510.3 L619.9,513.9 L622.4,506.7 L624.4,494.5 L626.8,487.8 L628.1,461.8 L629.8,460.6 L632.4,451.4 L634.1,460.6 L636.1,472.7 L638.5,484.8 L643.3,497.0 L645.0,497.7 L646.2,500.6 L650.6,500.6 L652.3,504.2 L655.2,500.6 L658.4,500.6 L660.1,504.2 L662.0,500.6 L668.1,500.6 L670.5,506.7 L672.9,507.9 L674.1,510.8 L678.2,510.8 L680.2,513.9 L686.2,513.9 L688.2,510.3 L689.4,510.3 L692.3,489.7 L694.2,452.1 L695.5,460.6 L697.2,438.3 L698.4,460.6 L700.1,507.9 L702.0,491.6 L704.4,491.6 L708.1,526.1 L709.8,525.6 L712.9,530.2 L715.3,530.9 L717.8,537.0 L720.2,526.1 L723.8,497.0 L728.7,447.3 L731.1,443.2 L732.8,441.7 L735.9,470.3 L739.2,506.7 L740.9,517.6 L742.8,521.2 L744.1,526.5 L746.0,527.3 L747.0,530.4 L748.4,526.5 L750.6,526.5 L751.8,533.3 L756.2,497.0 L759.3,454.5 L763.0,418.9 L765.9,435.2 L768.3,467.9 L770.0,471.5 L772.4,495.8 L774.4,504.2 L776.1,507.4 L779.2,507.4 L780.4,504.2 L782.1,507.4 L784.8,507.4 L786.5,500.6 L788.4,497.0 L790.8,472.7 L794.5,428.6 L798.6,428.6 L800.3,431.5 L801.5,461.8 L802.7,458.2 L805.4,497.5 L827.7,422.3 L831.3,425.5 L833.0,432.7 L835.0,454.5 L837.9,477.6 L841.8,478.0 L843.9,481.9 L846.6,478.0 L849.0,487.8 L851.9,487.8 L854.0,483.6 L855.2,477.6 L858.8,438.8 L864.2,415.8 L867.3,453.3 L871.0,484.8 L872.9,487.8 L877.0,487.8 L878.2,490.9 L880.7,500.6 L883.6,500.6 L886.7,483.6 L889.2,452.1 L890.4,458.2 L891.6,450.9 L893.3,422.3 L897.2,422.3 L900.1,458.2 L901.8,461.8 L903.7,483.6 L905.4,487.8 L907.3,499.4 L909.8,507.4 L912.7,507.4 L913.9,504.7 L915.1,513.9 L917.5,507.4 L921.9,459.4 L926.0,423.0 L929.6,427.9 L931.1,432.7 L932.8,455.8 L934.0,458.2 L935.9,478.8 L938.8,492.1 L941.8,494.5 L944.9,505.5 L946.6,513.9 L948.5,507.4 L950.9,499.4 L954.6,452.1 L958.2,433.9 L963.1,418.9 L966.0,450.9 L967.5,452.1 L969.2,471.5 L970.0,475.2 L971.2,490.9 L972.9,488.5 L973.6,500.6 L975.3,504.2 L976.8,494.5 L978.5,494.5 L979.7,497.5 L981.4,494.5 L983.3,492.1 L985.8,472.7 L987.5,448.5 L990.6,432.0 L997.4,432.0 L999.1,447.3 L1000.8,454.5 L1002.2,476.4 L1004.7,484.8 L1006.8,498.2 L1011.2,507.4 L1014.8,507.4 L1018.5,472.7 L1020.9,443.6 L1023.8,422.3 L1027.0,425.5 L1030.1,429.1 L1033.0,450.9 L1035.5,477.6 L1039.1,497.0 L1041.0,498.2 L1042.7,500.6 L1045.6,500.6 L1048.1,507.4 L1051.2,477.6 L1054.8,435.2 L1063.3,438.3 L1065.8,450.9 L1068.2,477.6 L1069.9,481.2 L1073.0,477.6 L1075.5,487.3 L1079.1,488.5 L1081.0,494.5 L1083.5,482.4 L1085.2,481.2 L1087.7,487.3 L1089.4,494.5 L1092.1,448.5 L1096.9,472.7 L1098.1,477.6 L1098.8,474.7 L1100.5,492.1 L1103.0,517.6 L1108.3,530.4 L1113.9,513.9 L1117.5,489.7 L1121.2,452.1 L1123.6,429.1 L1127.7,429.1 L1130.4,461.8 L1131.3,455.3 L1134.5,490.9 L1139.3,500.6 L1143.0,500.6 L1145.4,507.4 L1149.5,487.3 L1152.7,450.9 L1156.3,412.6 L1162.4,440.0 L1163.6,448.5 L1164.8,445.6 L1167.2,480.0 L1168.9,481.2 L1170.4,487.8 L1172.1,487.8 L1173.8,481.2 L1177.6,484.8 L1180.1,487.8 L1183.0,475.2 L1185.4,441.2 L1187.8,438.3 L1195.1,432.0 L1196.3,444.8 L1198.0,442.4 L1201.2,477.6 L1205.9,477.8 L1207.7,471.8 L1209.8,478.3 L1211.9,481.4 L1214.5,470.5 L1217.6,444.5 L1220.7,432.1 L1226.2,432.1 L1228.0,456.2 L1231.9,475.7 L1234.5,484.8 L1238.4,499.1 L1241.0,514.2 L1243.0,514.2 L1244.9,505.6 L1245.6,513.4 L1248.8,493.9 L1250.8,458.8 L1252.6,452.3 L1255.2,422.5 L1259.1,429.0 L1261.7,452.3 L1263.0,451.0 L1265.1,479.6 L1268.2,487.4 L1272.6,493.9 L1276.0,486.1 L1279.1,483.5 L1281.2,470.5 L1285.1,440.6 L1287.7,435.5 L1291.6,432.9 L1295.0,444.5 L1298.1,465.3 L1301.2,480.9 L1303.3,478.3 L1305.9,486.1 L1309.8,493.9 L1312.4,492.6 L1314.2,480.9 L1316.3,454.9 L1319.4,421.2 L1322.0,406.1 L1325.4,410.8 L1327.0,433.0" fill="none" stroke="#5eb4e6" stroke-width="2" stroke-linejoin="round" stroke-linecap="round"/>
</svg>
<div class="a t" style="left:743px;top:368px;font-size:12px;line-height:14px;color:#333">土壤墒情设备数据</div>
<div class="a t yl" style="left:245px;top:387px">50</div>
<div class="a t yl" style="left:245px;top:420px">40</div>
<div class="a t yl" style="left:245px;top:453px">30</div>
<div class="a t yl" style="left:245px;top:486px">20</div>
<div class="a t yl" style="left:245px;top:519px">10</div>
<div class="a t xl" style="left:297.3px;top:553px;width:40px;text-align:center">05–02</div><div class="a t xl" style="left:363.1px;top:553px;width:40px;text-align:center">05–04</div><div class="a t xl" style="left:428.9px;top:553px;width:40px;text-align:center">05–06</div><div class="a t xl" style="left:494.7px;top:553px;width:40px;text-align:center">05–08</div><div class="a t xl" style="left:560.5px;top:553px;width:40px;text-align:center">05–10</div><div class="a t xl" style="left:626.3px;top:553px;width:40px;text-align:center">05–12</div><div class="a t xl" style="left:692.1px;top:553px;width:40px;text-align:center">05–14</div><div class="a t xl" style="left:757.9px;top:553px;width:40px;text-align:center">05–16</div><div class="a t xl" style="left:823.7px;top:553px;width:40px;text-align:center">05–18</div><div class="a t xl" style="left:889.5px;top:553px;width:40px;text-align:center">05–20</div><div class="a t xl" style="left:955.3px;top:553px;width:40px;text-align:center">05–22</div><div class="a t xl" style="left:1021.1px;top:553px;width:40px;text-align:center">05–24</div><div class="a t xl" style="left:1086.9px;top:553px;width:40px;text-align:center">05–26</div><div class="a t xl" style="left:1152.7px;top:553px;width:40px;text-align:center">05–28</div><div class="a t xl" style="left:1218.5px;top:553px;width:40px;text-align:center">05–30</div><div class="a t xl" style="left:1284.3px;top:553px;width:40px;text-align:center">06–01</div>
<svg class="a" style="left:1228px;top:370px" width="22" height="190" viewBox="1228 370 22 190"><line x1="1231" y1="381.5" x2="1247" y2="381.5" stroke="#5eb4e6" stroke-width="2"/><circle cx="1239" cy="381.5" r="4" fill="#5eb4e6"/><line x1="1231" y1="399.5" x2="1247" y2="399.5" stroke="#cccccc" stroke-width="2"/><path d="M1239,395.5 L1243,399.5 L1239,403.5 L1235,399.5 Z" fill="#cccccc"/><line x1="1231" y1="417.5" x2="1247" y2="417.5" stroke="#cccccc" stroke-width="2"/><rect x="1235" y="413.5" width="8" height="8" fill="#cccccc"/><line x1="1231" y1="435.5" x2="1247" y2="435.5" stroke="#cccccc" stroke-width="2"/><path d="M1239,431.5 L1243,439.5 L1235,439.5 Z" fill="#cccccc"/><line x1="1231" y1="453.5" x2="1247" y2="453.5" stroke="#cccccc" stroke-width="2"/><path d="M1235,449.5 L1243,449.5 L1239,457.5 Z" fill="#cccccc"/><line x1="1231" y1="471.5" x2="1247" y2="471.5" stroke="#cccccc" stroke-width="2"/><circle cx="1239" cy="471.5" r="4" fill="#cccccc"/><line x1="1231" y1="489.5" x2="1247" y2="489.5" stroke="#cccccc" stroke-width="2"/><path d="M1239,485.5 L1243,489.5 L1239,493.5 L1235,489.5 Z" fill="#cccccc"/><line x1="1231" y1="507.5" x2="1247" y2="507.5" stroke="#cccccc" stroke-width="2"/><rect x="1235" y="503.5" width="8" height="8" fill="#cccccc"/><line x1="1231" y1="525.5" x2="1247" y2="525.5" stroke="#cccccc" stroke-width="2"/><path d="M1239,521.5 L1243,529.5 L1235,529.5 Z" fill="#cccccc"/><line x1="1231" y1="543.5" x2="1247" y2="543.5" stroke="#cccccc" stroke-width="2"/><path d="M1235,539.5 L1243,539.5 L1239,547.5 Z" fill="#cccccc"/></svg><div class="a t lg" style="left:1252px;top:374.0px;color:#333">土壤温度(层1)</div><div class="a t lg" style="left:1252px;top:392.0px;color:#cccccc">土壤温度(层2)</div><div class="a t lg" style="left:1252px;top:410.0px;color:#cccccc">土壤温度(层3)</div><div class="a t lg" style="left:1252px;top:428.0px;color:#cccccc">土壤温度(层4)</div><div class="a t lg" style="left:1252px;top:446.0px;color:#cccccc">土壤温度(层5)</div><div class="a t lg" style="left:1252px;top:464.0px;color:#cccccc">土壤湿度(层1)</div><div class="a t lg" style="left:1252px;top:482.0px;color:#cccccc">土壤湿度(层2)</div><div class="a t lg" style="left:1252px;top:500.0px;color:#cccccc">土壤湿度(层3)</div><div class="a t lg" style="left:1252px;top:518.0px;color:#cccccc">土壤湿度(层4)</div><div class="a t lg" style="left:1252px;top:536.0px;color:#cccccc">土壤湿度(层5)</div>
<div class="a t" style="left:1096px;top:537px;font-size:21px;line-height:24px;color:rgba(100,100,100,0.55)">激活 Windows</div>
<div class="a t" style="left:1097px;top:564px;font-size:15px;line-height:18px;color:rgba(100,100,100,0.55)">转到“设置”以激活 Windows。</div>
<div class="a t" style="left:1268px;top:565px;font-size:9px;line-height:10px;color:#909090;letter-spacing:0.45px">Highcharts.com</div>
</body></html>
